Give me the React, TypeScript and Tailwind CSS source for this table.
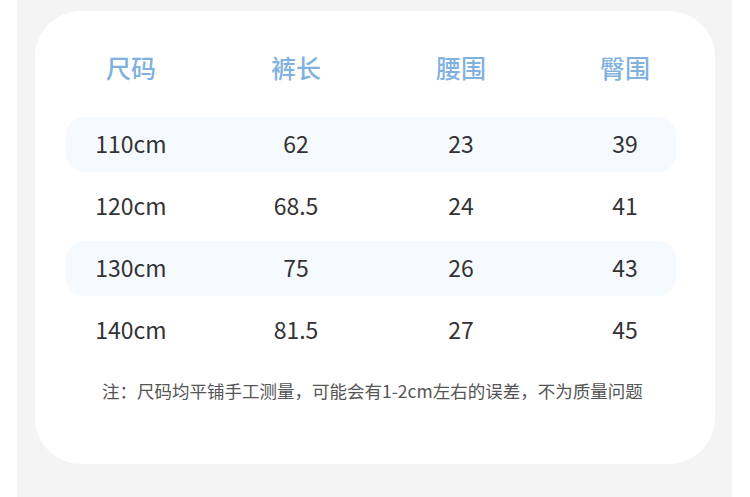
const headers = ["尺码", "裤长", "腰围", "臀围"];

const rows = [
  ["110cm", "62", "23", "39"],
  ["120cm", "68.5", "24", "41"],
  ["130cm", "75", "26", "43"],
  ["140cm", "81.5", "27", "45"],
];

const cols = "grid grid-cols-[130px_200px_130px_198px]";

export default function App() {
  return (
    <div
      className="flex h-[497px] w-[750px] bg-white"
      style={{ fontFamily: '"Noto Sans CJK SC", "Noto Sans", sans-serif' }}
    >
      <div className="ml-[17px] flex w-[715px] flex-col bg-[#f4f4f4] pt-[11px]">
        <div className="ml-[18px] flex h-[453px] w-[680px] flex-col rounded-[46px] bg-white px-[31px]">
          <div className={`${cols} mt-[43px] h-[26px] items-center text-[25px] font-medium leading-none text-[#80b1df]`}>
            {headers.map((h) => (
              <div key={h} className="text-center">
                {h}
              </div>
            ))}
          </div>
          <div className="mt-[37px] flex w-[610px] flex-col gap-[7px]">
            {rows.map((r, i) => (
              <div
                key={r[0]}
                className={`${cols} h-[55px] items-center rounded-[18px] pb-[3px] text-[23px] text-[#333333] ${
                  i % 2 === 0 ? "bg-[#f5faff]" : ""
                }`}
              >
                {r.map((c, j) => (
                  <div key={j} className="text-center">
                    {c}
                  </div>
                ))}
              </div>
            ))}
          </div>
          <p className="mt-[24px] pl-[36px] text-[17.5px] leading-none text-[#555555]">
            注：尺码均平铺手工测量，可能会有1-2cm左右的误差，不为质量问题
          </p>
        </div>
      </div>
    </div>
  );
}
